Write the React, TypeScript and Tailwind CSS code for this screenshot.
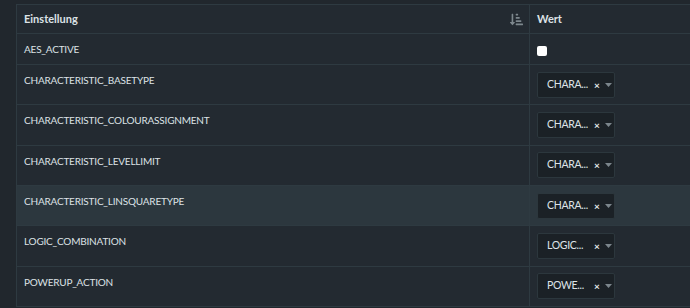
import { FaSortAmountDownAlt } from 'react-icons/fa';

type Row = {
  key: string;
  shown?: string;
  checkbox?: boolean;
  hover?: boolean;
};

const ROWS: Row[] = [
  { key: 'AES_ACTIVE', checkbox: true },
  { key: 'CHARACTERISTIC_BASETYPE', shown: 'CHARA...' },
  { key: 'CHARACTERISTIC_COLOURASSIGNMENT', shown: 'CHARA...' },
  { key: 'CHARACTERISTIC_LEVELLIMIT', shown: 'CHARA...' },
  { key: 'CHARACTERISTIC_LINSQUARETYPE', shown: 'CHARA...', hover: true },
  { key: 'LOGIC_COMBINATION', shown: 'LOGIC...' },
  { key: 'POWERUP_ACTION', shown: 'POWE...' },
];

function ValueSelect({ value, full }: { value: string; full: string }) {
  return (
    <div
      title={full}
      className="flex h-[26px] w-[78px] items-center rounded-[2px] border border-[#2c373d] bg-[#1b2126] pl-[9px]"
    >
      <span className="w-[47px] whitespace-nowrap text-[10.5px] tracking-[-0.3px] text-[#dfe4e8]">{value}</span>
      <span className="text-[10px] font-bold leading-none text-[#e6eaed]">×</span>
      <svg className="ml-[5px]" width="7" height="4" viewBox="0 0 7 4">
        <path d="M0 0h7L3.5 4z" fill="#7c868c" />
      </svg>
    </div>
  );
}

export default function App() {
  return (
    <div
      className="h-[308px] w-[690px] overflow-hidden bg-[#21272d] pl-4 pt-1"
      style={{ fontFamily: 'Lato, "Noto Sans", sans-serif' }}
    >
      <div className="w-[800px] border-l border-t border-[#2e3a41] bg-[#232a31] text-[#dde2e6]">
        {/* header */}
        <div className="flex h-[29px] border-b border-[#2e3a41] text-[11px] font-bold">
          <div className="flex w-[513px] items-center justify-between border-r border-[#2e3a41] pl-[7px] pr-[6px]">
            <span>Einstellung</span>
            <FaSortAmountDownAlt className="text-[13px] text-[#7d878d]" />
          </div>
          <div className="flex flex-1 items-center pl-[7px]">Wert</div>
        </div>

        {ROWS.map((row) => (
          <div
            key={row.key}
            className={`flex border-b border-[#2e3a41] text-[10px] tracking-[-0.2px] ${
              row.checkbox ? 'h-[31px]' : 'h-[40.33px]'
            } ${row.hover ? 'bg-[#2c373e]' : ''}`}
          >
            <div className="w-[513px] border-r border-[#2e3a41] pl-[7px] pt-[8px] leading-[14px]">
              {row.key}
            </div>
            <div className="flex flex-1 items-center pl-[7px]">
              {row.checkbox ? (
                <span className="mt-[4px] h-[10px] w-[10px] rounded-[2px] bg-white" />
              ) : (
                <ValueSelect value={row.shown ?? ''} full={row.key} />
              )}
            </div>
          </div>
        ))}
      </div>
    </div>
  );
}
